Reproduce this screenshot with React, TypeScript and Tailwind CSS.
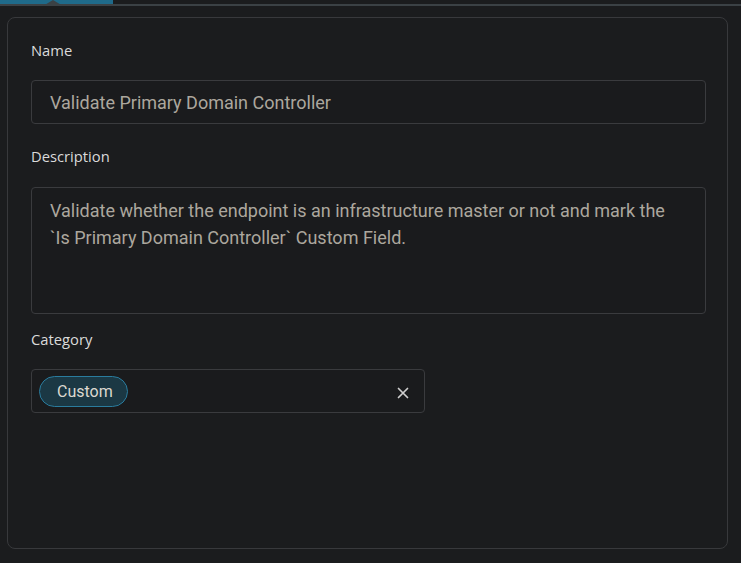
import React from "react";

export default function App() {
  return (
    <div className="w-[741px] h-[563px] bg-[#1b1c1e] relative overflow-hidden" style={{ fontFamily: "Roboto, sans-serif" }}>
      <div className="relative h-[6px]">
        <div className="w-[113px] h-[5px] bg-[#1f6a8a]" />
        <div className="absolute left-0 right-0 top-[4px] h-[2px] bg-[#3b4145]" />
        <svg className="absolute left-[43px] top-0" width="20" height="6" viewBox="0 0 20 6">
          <polygon points="10,0 20,6 0,6" fill="#3b4145" />
        </svg>
      </div>
      <div className="mt-[11px] ml-[7px] w-[721px] h-[532px] rounded-[8px] border border-[#38393c] bg-[#1b1c1e] px-[23px] pt-[22px]">
        <div className="text-[14.75px] leading-[20px] text-[#dadada]" style={{ fontFamily: "'Open Sans', sans-serif" }}>Name</div>
        <div className="mt-[20px] h-[44px] w-[675px] rounded-[4px] border border-[#3a3b3e] bg-[#1a1b1d] flex items-center pl-[18px] text-[18px] text-[#aca79e]">
          Validate Primary Domain Controller
        </div>
        <div className="mt-[22px] text-[14.75px] leading-[20px] text-[#dadada]" style={{ fontFamily: "'Open Sans', sans-serif" }}>Description</div>
        <div className="mt-[21px] h-[127px] w-[675px] rounded-[4px] border border-[#3a3b3e] bg-[#1a1b1d] pl-[18px] pr-[10px] pt-[9px] text-[18px] leading-[27px] text-[#aca79e]">
          Validate whether the endpoint is an infrastructure master or not and mark the
          <br />
          `Is Primary Domain Controller` Custom Field.
        </div>
        <div className="mt-[15px] text-[14.75px] leading-[20px] text-[#dadada]" style={{ fontFamily: "'Open Sans', sans-serif" }}>Category</div>
        <div className="mt-[20px] h-[44px] w-[394px] rounded-[4px] border border-[#3a3b3e] bg-[#1a1b1d] flex items-center pl-[7px] pr-[15px]">
          <div className="h-[31px] pl-[17px] pr-[14px] pt-[2px] rounded-full border border-[#2a7c9e] bg-[#1b3844] flex items-center text-[16px] text-[#dcd8d0]">
            Custom
          </div>
          <div className="flex-1" />
          <svg width="12" height="12" viewBox="0 0 12 12" className="relative top-[2px]">
            <path d="M1.5 1.5 L10.5 10.5 M10.5 1.5 L1.5 10.5" stroke="#cfcfcf" strokeWidth="1.7" strokeLinecap="round" />
          </svg>
        </div>
      </div>
    </div>
  );
}
